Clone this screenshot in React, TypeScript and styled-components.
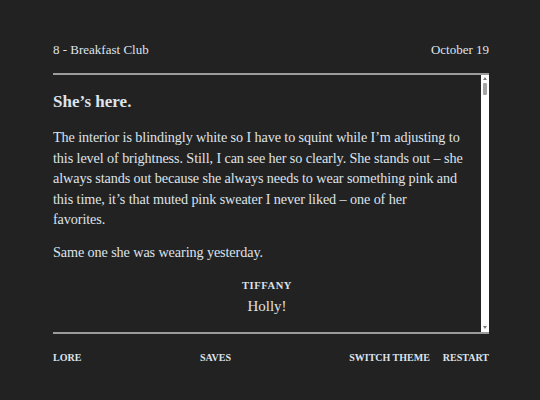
import React from "react";
import styled, { createGlobalStyle } from "styled-components";

const Global = createGlobalStyle`
  html, body { margin: 0; padding: 0; background: #222222; }
  body { font-family: "Liberation Serif", "DejaVu Serif", serif; color: #dfe3ea; }
`;

const Page = styled.div`
  width: 436px;
  padding: 40px 0 0 53px;
`;

const Header = styled.header`
  display: flex;
  justify-content: space-between;
  align-items: center;
  height: 20px;
  padding-bottom: 13px;
  font-size: 13px;
`;

const Frame = styled.main`
  display: flex;
  height: 257px;
  border-top: 2px solid #9c9c9c;
  border-bottom: 2px solid #9c9c9c;
`;

const Body = styled.div`
  flex: 1;
  overflow-y: auto;
  overflow-x: hidden;
  scrollbar-width: none;
  &::-webkit-scrollbar { display: none; }
`;

const Track = styled.div`
  width: 8px;
  flex: none;
  background: #ffffff;
  display: flex;
  flex-direction: column;
  align-items: center;
`;

const Arrow = styled.div<{ $down?: boolean }>`
  width: 0;
  height: 0;
  margin-top: ${(p) => (p.$down ? "auto" : "2px")};
  margin-bottom: ${(p) => (p.$down ? "3px" : "0")};
  border-left: 2.5px solid transparent;
  border-right: 2.5px solid transparent;
  ${(p) => (p.$down ? "border-top: 3px solid #7a7a7a;" : "border-bottom: 3px solid #7a7a7a;")}
`;

const Thumb = styled.div`
  width: 4px;
  height: 12px;
  margin-top: 3px;
  background: #a4a4a4;
  border-radius: 1px;
`;

const Content = styled.div`
  padding: 16px 0 20px 0;
`;

const Heading = styled.h2`
  margin: 0 0 14px;
  font-size: 17px;
  font-weight: bold;
  line-height: 22px;
`;

const Para = styled.p`
  margin: 0 0 12px;
  font-size: 14.2px;
  letter-spacing: -0.1px;
  line-height: 20.5px;
  white-space: nowrap;
`;

const Speaker = styled.div`
  text-align: center;
  margin-top: 17px;
  font-size: 10.5px;
  letter-spacing: 0.6px;
  line-height: 14px;
  font-weight: bold;
`;

const Line = styled.div`
  text-align: center;
  margin-top: 2px;
  font-size: 15px;
  line-height: 22px;
  margin-bottom: 16px;
`;

const Footer = styled.nav`
  display: grid;
  grid-template-columns: 147px 147px 1fr;
  padding-top: 18px;
  font-size: 10px;
  font-weight: bold;
  white-space: nowrap;
`;

const Group = styled.div<{ $align?: string }>`
  display: flex;
  gap: 13px;
  justify-content: ${(p) => p.$align || "flex-start"};
`;

const Link = styled.a`
  color: #dfe3ea;
  text-decoration: underline;
  text-decoration-color: #9a1f33;
  text-underline-offset: 2px;
  cursor: pointer;
`;

export default function App() {
  return (
    <>
      <Global />
      <Page>
        <Header>
          <span>8 - Breakfast Club</span>
          <span>October 19</span>
        </Header>
        <Frame>
          <Body>
            <Content>
              <Heading>She’s here.</Heading>
              <Para>
                The interior is blindingly white so I have to squint while I’m adjusting to
                <br />
                this level of brightness. Still, I can see her so clearly. She stands out – she
                <br />
                always stands out because she always needs to wear something pink and
                <br />
                this time, it’s that muted pink sweater I never liked – one of her
                <br />
                favorites.
              </Para>
              <Para>Same one she was wearing yesterday.</Para>
              <Speaker>TIFFANY</Speaker>
              <Line>Holly!</Line>
              <Para>She waves at me from the booth by the window.</Para>
              <Para>I wave back, and slide in across from her.</Para>
              <Speaker>TIFFANY</Speaker>
              <Line>I already ordered for you.</Line>
              <Para>Of course she did.</Para>
              <Para>The waitress brings two cups of coffee.</Para>
              <Speaker>HOLLY</Speaker>
              <Line>Thanks.</Line>
              <Para>I don’t really feel like eating.</Para>
              <Para>She keeps talking, and I keep nodding.</Para>
              <Para>Outside, the morning is grey and quiet.</Para>
              <Para>It feels like nothing has changed at all.</Para>
              <Para>But everything has.</Para>
            </Content>
          </Body>
          <Track>
            <Arrow />
            <Thumb />
            <Arrow $down />
          </Track>
        </Frame>
        <Footer>
          <Group>
            <Link>LORE</Link>
          </Group>
          <Group>
            <Link>SAVES</Link>
          </Group>
          <Group $align="flex-end">
            <Link>SWITCH THEME</Link>
            <Link>RESTART</Link>
          </Group>
        </Footer>
      </Page>
    </>
  );
}
